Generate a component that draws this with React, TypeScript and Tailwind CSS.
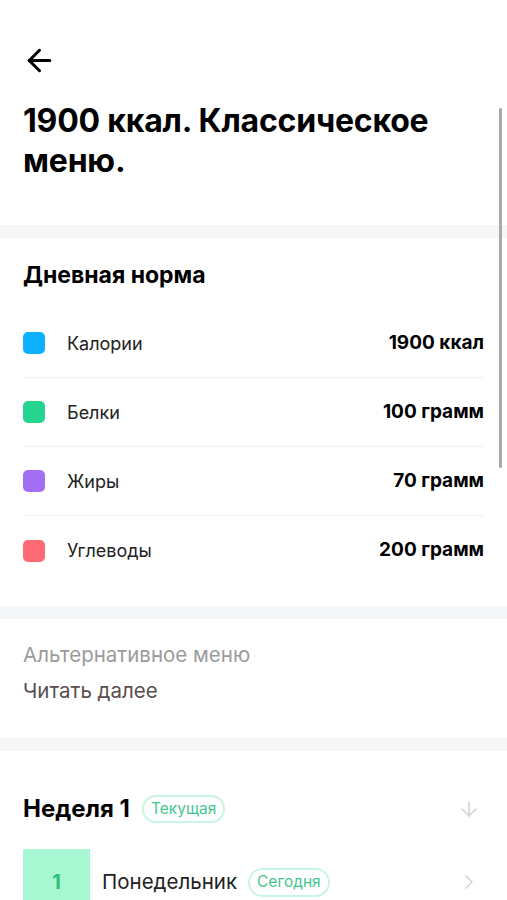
import React from "react";
import { ArrowLeft, ArrowDown, ChevronRight } from "lucide-react";

const norms = [
  { label: "Калории", value: "1900 ккал", color: "bg-[#0db1ff]" },
  { label: "Белки", value: "100 грамм", color: "bg-[#25d48e]" },
  { label: "Жиры", value: "70 грамм", color: "bg-[#a46ff5]" },
  { label: "Углеводы", value: "200 грамм", color: "bg-[#ff6b74]" },
];

const Divider = () => <div className="h-[13px] bg-[#f5f6f8]" />;

export default function App() {
  return (
    <div
      className="relative w-[507px] h-[900px] overflow-hidden bg-white text-black"
      style={{ fontFamily: "Inter, 'Noto Sans', sans-serif" }}
    >
      {/* scroll indicator */}
      <div className="absolute right-[5px] top-[108px] w-[3px] h-[360px] rounded-full bg-[#a9a9a9]" />

      {/* header */}
      <div className="px-[23px] pt-[43px] pb-[44px]">
        <ArrowLeft className="w-[35px] h-[35px] -ml-[1px]" strokeWidth={2.1} />
        <h1 className="mt-[23px] text-[32px] leading-[40px] font-bold tracking-[-0.2px]">
          1900 ккал. Классическое меню.
        </h1>
      </div>

      <Divider />

      {/* daily norm */}
      <div className="px-[23px] pt-[23px] pb-[21px]">
        <h2 className="text-[23px] leading-[28px] font-bold">Дневная норма</h2>
        <ul className="mt-[20px]">
          {norms.map((n, idx) => (
            <li
              key={idx}
              className={
                "flex items-center h-[69px] " +
                (idx < norms.length - 1 ? "border-b border-[#f1f1f3]" : "")
              }
            >
              <div className={"w-[22px] h-[22px] rounded-[5px] " + n.color} />
              <div className="ml-[22px] text-[18px] text-[#222]">{n.label}</div>
              <div className="ml-auto text-[19px] font-bold">{n.value}</div>
            </li>
          ))}
        </ul>
      </div>

      <Divider />

      {/* alternative */}
      <div className="px-[23px] pt-[24px] pb-[35px]">
        <p className="text-[20.5px] leading-[24px] text-[#9b9b9b]">Альтернативное меню</p>
        <p className="mt-[12px] text-[20.5px] leading-[24px] text-[#5b4e4e]">Читать далее</p>
      </div>

      <Divider />

      {/* week */}
      <div className="px-[23px] pt-[44px]">
        <div className="flex items-center">
          <h2 className="text-[24px] leading-[28px] font-bold">Неделя 1</h2>
          <span className="ml-[12px] px-[7px] h-[28px] flex items-center rounded-full border-2 border-[#c8f6e0] text-[15.5px] text-[#45c58f]">
            Текущая
          </span>
          <ArrowDown className="ml-auto mr-[3px] w-[24px] h-[24px] text-[#d6d6d6]" strokeWidth={1.7} />
        </div>
        <div className="mt-[26px] flex items-center">
          <div className="w-[67px] h-[66px] bg-[#a8f7d3] flex items-center justify-center text-[20px] font-bold text-[#2fbd80]">
            1
          </div>
          <span className="ml-[12px] text-[20.5px] text-[#222]">Понедельник</span>
          <span className="ml-[11px] px-[7px] h-[29px] flex items-center rounded-full border-2 border-[#c8f6e0] text-[15.5px] text-[#45c58f]">
            Сегодня
          </span>
          <ChevronRight className="ml-auto mr-[3px] w-[24px] h-[24px] text-[#d6d6d6]" strokeWidth={1.7} />
        </div>
      </div>
    </div>
  );
}
